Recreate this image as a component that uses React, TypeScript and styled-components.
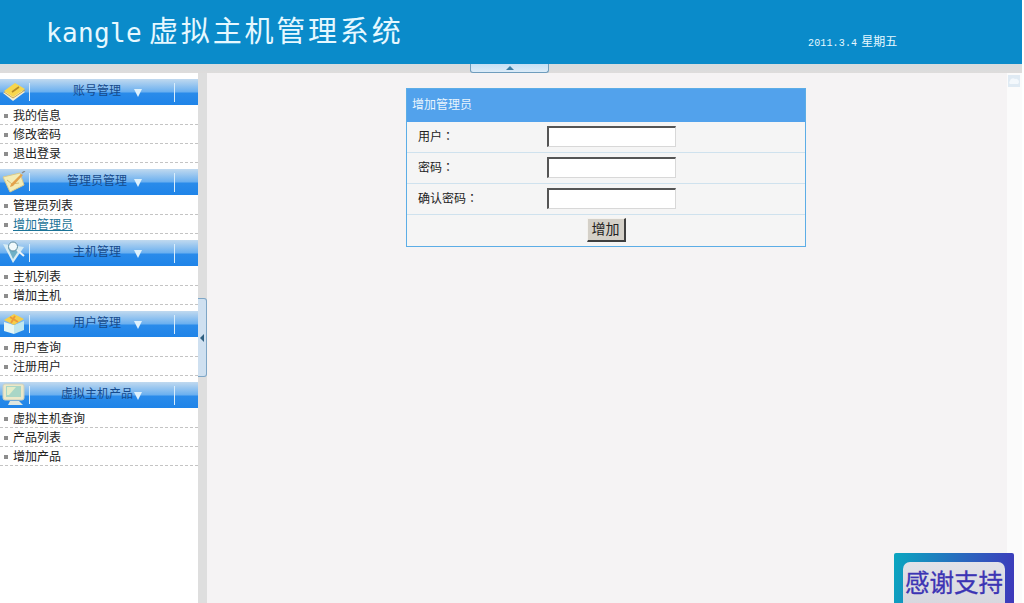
import { createGlobalStyle } from "styled-components";
import styled from "styled-components";

const GlobalStyle = createGlobalStyle`
  html, body {
    margin: 0;
    padding: 0;
    height: 100%;
    background: #fff;
    overflow: hidden;
    font-family: "Liberation Sans", "Noto Sans CJK SC", sans-serif;
    font-size: 12px;
    color: #222;
  }
  * { box-sizing: border-box; }
`;

const Page = styled.div`
  position: relative;
  width: 1022px;
  height: 603px;
  display: flex;
  flex-direction: column;
  overflow: hidden;
  background: #fff;
`;

const Header = styled.header`
  height: 64px;
  flex: none;
  display: flex;
  background: #0a8bca;
  color: #e6f8ff;
`;

const Title = styled.h1`
  margin: 0;
  width: 808px;
  padding: 9px 0 0 46px;
  font-size: 29px;
  line-height: 40px;
  font-weight: 400;
  letter-spacing: 2.8px;
  white-space: nowrap;
  font-family: "Noto Sans CJK SC", sans-serif;
`;

const TitleLatin = styled.span`
  font-family: "DejaVu Sans Mono", monospace;
  font-size: 26px;
  letter-spacing: 0.35px;
  margin-right: 7px;
`;

const DateText = styled.div`
  padding-top: 33px;
  font-size: 12px;
  line-height: 16px;
  white-space: nowrap;
  font-family: "Noto Sans CJK SC", sans-serif;
`;

const DateDigits = styled.span`
  font-family: "Liberation Mono", monospace;
  font-size: 10px;
  letter-spacing: 0.15px;
  margin-right: 4px;
`;

const Strip = styled.div`
  height: 9px;
  flex: none;
  padding-left: 470px;
  background: linear-gradient(#d6dcdf, #dedcdb);
`;

const TopToggle = styled.div`
  width: 79px;
  height: 9px;
  display: flex;
  align-items: center;
  justify-content: center;
  background: linear-gradient(#c4e0f5, #dcecf8);
  border: 1px solid #6f9dbd;
  border-top: 0;
  border-radius: 0 0 3px 3px;
`;

const UpArrow = styled.i`
  width: 0;
  height: 0;
  border-left: 4px solid transparent;
  border-right: 4px solid transparent;
  border-bottom: 4px solid #3b7ea6;
`;

const Body = styled.div`
  flex: 1;
  min-height: 0;
  display: flex;
`;

const Sidebar = styled.aside`
  width: 198px;
  flex: none;
  padding-top: 6px;
  background: #fff;
`;

const Section = styled.section`
  margin-bottom: 6px;
`;

const SectionHead = styled.div`
  height: 26px;
  display: flex;
  background: linear-gradient(#c0d9ef 0, #69aff0 13px, #2a8bea 14px, #1f84e8 100%);
`;

const IconCell = styled.div`
  width: 30px;
  flex: none;
  display: flex;
  align-items: center;
  justify-content: center;
  margin: 0 0 1px;
  position: relative;

  &::after {
    content: "";
    position: absolute;
    right: 0;
    top: 4px;
    bottom: 3px;
    width: 1px;
    background: #d9edfb;
  }

  svg {
    margin-right: 3px;
    filter: blur(0.4px);
  }
`;

const HeadTitle = styled.div`
  width: 145px;
  flex: none;
  display: flex;
  align-items: center;
  padding: 0 0 3px 31px;
  border-right: 1px solid #d9edfb;
  margin: 4px 0 3px;
`;

const HeadLabel = styled.span`
  width: 72px;
  text-align: center;
  color: #164a8c;
  white-space: nowrap;
  line-height: 14px;
`;

const DownArrow = styled.i`
  width: 0;
  height: 0;
  margin: 4px 0 0 1px;
  border-left: 4.5px solid transparent;
  border-right: 4.5px solid transparent;
  border-top: 8px solid #dff2fd;
`;

const MenuList = styled.ul`
  margin: 0;
  padding: 1px 0 0;
  list-style: none;
`;

const MenuItem = styled.li<{ $active?: boolean }>`
  height: 19px;
  display: flex;
  align-items: center;
  padding: 2px 0 0 4px;
  border-bottom: 1px dashed #c4c4c4;
  color: ${(p) => (p.$active ? "#1b7397" : "#222")};
  line-height: 14px;

  &::before {
    content: "";
    width: 4px;
    height: 4px;
    margin-right: 5px;
    background: #8d8d8d;
  }

  span {
    text-decoration: ${(p) => (p.$active ? "underline" : "none")};
  }
`;

const Divider = styled.div`
  width: 9px;
  flex: none;
  padding-top: 225px;
  background: #dedede;
`;

const SideToggle = styled.div`
  width: 9px;
  height: 79px;
  display: flex;
  align-items: center;
  justify-content: center;
  background: #cfe0f0;
  border: 1px solid #7ea6c6;
  border-left: 0;
  border-radius: 0 3px 3px 0;
`;

const LeftArrow = styled.i`
  width: 0;
  height: 0;
  border-top: 4px solid transparent;
  border-bottom: 4px solid transparent;
  border-right: 4px solid #2f5f80;
`;

const Main = styled.main`
  width: 800px;
  flex: none;
  padding: 15px 0 0 199px;
  background: #f5f3f4;
`;

const FormPanel = styled.form`
  width: 400px;
  margin: 0;
  background: #f5f5f5;
  border: 1px solid #5cade6;
`;

const PanelHead = styled.div`
  height: 33px;
  padding: 0 0 4px 5px;
  display: flex;
  align-items: center;
  background: #52a2ec;
  color: #e8f4fd;
`;

const FieldRow = styled.div`
  height: 31px;
  display: grid;
  grid-template-columns: 140px 1fr;
  align-items: center;
  padding-bottom: 1px;
  border-bottom: 1px solid #cfe2ee;
`;

const FieldLabel = styled.label`
  padding: 0 0 2px 11px;
  color: #222;
  font-family: "Noto Sans CJK TC", sans-serif;
`;

const TextInput = styled.input`
  width: 129px;
  height: 21px;
  padding: 0 2px;
  background: #fff;
  border-style: solid;
  border-width: 2px 1px 1px 2px;
  border-color: #555 #d8d8d8 #d8d8d8 #555;
  border-radius: 0;
  outline: 0;
`;

const ActionRow = styled.div`
  height: 31px;
  display: flex;
  justify-content: center;
  padding: 3px 0 0 0;
`;

const SubmitButton = styled.button`
  width: 39px;
  height: 24px;
  padding: 0 0 5px;
  font-family: "Noto Sans CJK SC", sans-serif;
  font-size: 14px;
  line-height: 18px;
  color: #222;
  background: #d4d0c8;
  border-style: solid;
  border-width: 1px 2px 2px 1px;
  border-color: #f4f2ee #3f3f3f #3f3f3f #f4f2ee;
`;

const ScrollGutter = styled.div`
  flex: 1;
  padding: 2px 0 0 1px;
  background: #fbfbfb;
`;

const ScrollTop = styled.div`
  width: 12px;
  height: 12px;
  display: flex;
  align-items: center;
  justify-content: center;
  background: #dfeaf3;
`;

const ThanksBadge = styled.div`
  position: absolute;
  left: 894px;
  top: 553px;
  width: 120px;
  height: 60px;
  padding: 9px 9px 0;
  background: linear-gradient(100deg, #0aa6c0, #2a66be 55%, #3f36bb);
  border-radius: 2px;
`;

const ThanksInner = styled.div`
  height: 60px;
  padding-top: 2px;
  text-align: center;
  font-family: "Noto Sans CJK SC", sans-serif;
  font-size: 24.5px;
  line-height: 36px;
  white-space: nowrap;
  color: #3c34b4;
  -webkit-text-stroke: 0.3px #3c34b4;
  background: linear-gradient(#e2e2e8, #d2d3da);
  border-radius: 7px;
`;

const BookIcon = () => (
  <svg width="24" height="20" viewBox="0 0 24 20">
    <path d="M1 11 13 4l10 6-12 9z" fill="#f4efd6" />
    <path d="M2 9 13 1l10 6-12 8z" fill="#f7d64e" />
    <path d="M10 10l7-5" stroke="#b58a26" strokeWidth="1.6" />
    <path d="M2 10l9 6 12-8" stroke="#c9a54a" fill="none" />
  </svg>
);

const NoteIcon = () => (
  <svg width="24" height="22" viewBox="0 0 24 22">
    <path d="M1 6 18 2l4 12-14 7z" fill="#f3ecb6" stroke="#d9c88a" />
    <path d="M5 9l5 4 7-1" stroke="#d9bd6e" fill="none" />
    <path d="M8 16l3-1 10-11-2-1L9 13z" fill="#e3a24c" />
    <path d="M20 2l3-2" stroke="#8a8a8a" strokeWidth="1.4" />
  </svg>
);

const SearchIcon = () => (
  <svg width="24" height="23" viewBox="0 0 24 23">
    <path d="M1 3 22 6 11 22z" fill="#d8ecf3" />
    <path d="M6 7l11 2-6 9z" fill="#6fb0c6" />
    <circle cx="11" cy="5.5" r="4.5" fill="#f1f9fc" stroke="#5d8ba0" />
    <path d="M15 9l7 6" stroke="#f0f4f6" strokeWidth="2" />
  </svg>
);

const BoxIcon = () => (
  <svg width="24" height="22" viewBox="0 0 24 22">
    <path d="M2 9v9l10 3V12z" fill="#e6f7f5" />
    <path d="M12 12v9l10-4V8z" fill="#bfe6ee" />
    <path d="M2 7 12 1l10 5-10 6z" fill="#f6cf4a" />
    <path d="M8 4l8 5M13 3l-4 7" stroke="#ec9a3a" strokeWidth="1.8" />
  </svg>
);

const MonitorIcon = () => (
  <svg width="24" height="23" viewBox="0 0 24 23">
    <rect x="1" y="1" width="21" height="16" rx="2" fill="#ece8c8" stroke="#c8cfc0" />
    <rect x="4" y="3" width="15" height="11" fill="#a9d6c6" />
    <path d="M5 4h9l-7 8H5z" fill="#e4edc8" />
    <path d="M8 18h9l4 4H6z" fill="#dfe6df" />
  </svg>
);

const menu = [
  { title: "账号管理", icon: <BookIcon />, items: ["我的信息", "修改密码", "退出登录"] },
  { title: "管理员管理", icon: <NoteIcon />, items: ["管理员列表", "增加管理员"] },
  { title: "主机管理", icon: <SearchIcon />, items: ["主机列表", "增加主机"] },
  { title: "用户管理", icon: <BoxIcon />, items: ["用户查询", "注册用户"] },
  { title: "虚拟主机产品", icon: <MonitorIcon />, items: ["虚拟主机查询", "产品列表", "增加产品"] },
];

const fields = ["用户：", "密码：", "确认密码："];

export default function App() {
  return (
    <Page>
      <GlobalStyle />
      <Header>
        <Title>
          <TitleLatin>kangle</TitleLatin>虚拟主机管理系统
        </Title>
        <DateText>
          <DateDigits>2011.3.4</DateDigits>星期五
        </DateText>
      </Header>
      <Strip>
        <TopToggle>
          <UpArrow />
        </TopToggle>
      </Strip>
      <Body>
        <Sidebar>
          {menu.map((section) => (
            <Section key={section.title}>
              <SectionHead>
                <IconCell>{section.icon}</IconCell>
                <HeadTitle>
                  <HeadLabel>{section.title}</HeadLabel>
                  <DownArrow />
                </HeadTitle>
              </SectionHead>
              <MenuList>
                {section.items.map((item) => (
                  <MenuItem key={item} $active={item === "增加管理员"}>
                    <span>{item}</span>
                  </MenuItem>
                ))}
              </MenuList>
            </Section>
          ))}
        </Sidebar>
        <Divider>
          <SideToggle>
            <LeftArrow />
          </SideToggle>
        </Divider>
        <Main>
          <FormPanel>
            <PanelHead>增加管理员</PanelHead>
            {fields.map((label) => (
              <FieldRow key={label}>
                <FieldLabel>{label}</FieldLabel>
                <TextInput type={label === "用户：" ? "text" : "password"} />
              </FieldRow>
            ))}
            <ActionRow>
              <SubmitButton type="button">增加</SubmitButton>
            </ActionRow>
          </FormPanel>
        </Main>
        <ScrollGutter>
          <ScrollTop>
            <svg width="10" height="6" viewBox="0 0 10 6">
              <path d="M1 6a2 2 0 0 1 0-3 3 3 0 0 1 5-2 3 3 0 0 1 3 5z" fill="#f3f8fc" />
            </svg>
          </ScrollTop>
        </ScrollGutter>
      </Body>
      <ThanksBadge>
        <ThanksInner>感谢支持</ThanksInner>
      </ThanksBadge>
    </Page>
  );
}
